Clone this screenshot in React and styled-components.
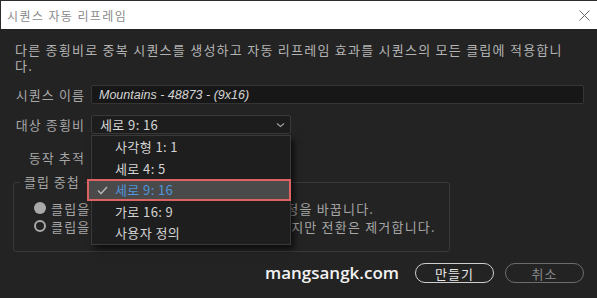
import React from "react";
import styled, { createGlobalStyle, css } from "styled-components";

const GlobalStyle = createGlobalStyle`
  html, body {
    margin: 0;
    padding: 0;
    background: #232323;
  }
  * {
    box-sizing: border-box;
  }
`;

const Window = styled.div`
  width: 597px;
  height: 298px;
  background: #232323;
  display: flex;
  flex-direction: column;
  overflow: hidden;
  font-family: "Noto Sans CJK KR", "Noto Sans", sans-serif;
  font-size: 13px;
  letter-spacing: 1px;
`;

const TitleBar = styled.div`
  height: 29px;
  flex: none;
  background: #ffffff;
  border-top: 1px solid #2c2c2c;
  border-left: 1px solid #2c2c2c;
  display: flex;
  align-items: center;
  justify-content: space-between;
  padding: 0 7px 0 6px;
`;

const Title = styled.span`
  font-size: 12px;
  letter-spacing: 1.4px;
  color: #8a8a8a;
`;

const CloseButton = styled.span`
  display: flex;
  width: 11px;
  height: 11px;
  margin-top: 1px;
`;

const Body = styled.div`
  flex: 1;
  display: flex;
  flex-direction: column;
  padding: 0 13px;
`;

const Description = styled.p`
  margin: 13px 0 0 2px;
  line-height: 16px;
  letter-spacing: 1.25px;
  color: #b3b3b3;
  white-space: nowrap;
`;

const FormRow = styled.div`
  display: grid;
  grid-template-columns: 72px 200px 1fr;
  column-gap: 6px;
  align-items: center;
  height: 19px;
  margin-top: ${p => p.$gap}px;
`;

const Label = styled.span`
  text-align: right;
  color: #a6a6a6;
  letter-spacing: 1.1px;
  white-space: nowrap;
`;

const TextField = styled.div`
  grid-column: 2 / 4;
  height: 19px;
  background: #171717;
  border: 1px solid #353535;
  border-radius: 2px;
  padding-left: 7px;
  display: flex;
  align-items: center;
  font-family: "Liberation Sans", Arial, sans-serif;
  font-style: italic;
  font-size: 12.5px;
  letter-spacing: 0;
  color: #d4d4d4;
`;

const SelectWrap = styled.div`
  position: relative;
  height: 19px;
`;

const SelectBox = styled.div`
  height: 19px;
  background: #1d1d1d;
  border: 1px solid #393939;
  border-radius: 2px;
  display: flex;
  align-items: center;
  justify-content: space-between;
  padding: 0 5px 0 8px;
  letter-spacing: 0.4px;
  color: #d6d6d6;
`;

const OptionList = styled.ul`
  position: absolute;
  top: 20px;
  left: 0;
  width: 200px;
  margin: 0;
  padding: 0;
  list-style: none;
  background: #1e1e1e;
  border: 1px solid #3a3a3a;
  box-shadow: 3px 4px 6px rgba(0, 0, 0, 0.65);
  z-index: 3;
`;

const OptionItem = styled.li`
  position: relative;
  height: 21.5px;
  display: flex;
  align-items: center;
  padding-left: 23px;
  letter-spacing: 0.4px;
  color: #d4d4d4;
  white-space: nowrap;

  ${p => p.$selected && css`
    margin: 0 -1px 0 -5px;
    padding-left: 26px;
    border: 2px solid #df6262;
    background: #4a4a4a;
    color: #4f94dc;
  `}
`;

const Check = styled.svg`
  position: absolute;
  left: 8px;
  top: 5px;
`;

const Group = styled.fieldset`
  margin: 7.5px 0 0;
  width: 437px;
  height: 78px;
  padding: 0 6px 8px;
  border: 1px solid #393939;
  border-radius: 3px;
  min-width: 0;
`;

const Legend = styled.legend`
  padding: 0 4px;
  line-height: 16px;
  color: #a6a6a6;
`;

const RadioList = styled.div`
  display: flex;
  flex-direction: column;
  padding: 9px 0 0 14px;
`;

const RadioRow = styled.div`
  display: flex;
  align-items: center;
  gap: 5px;
  height: 18px;
  letter-spacing: 1.2px;
  color: #a6a6a6;
  white-space: nowrap;
`;

const RadioDot = styled.span`
  width: 12px;
  height: 12px;
  flex: none;
  border-radius: 50%;
  ${p => p.$checked
    ? css`background: #a9a9a9;`
    : css`border: 2px solid #a9a9a9;`}
`;

const Footer = styled.div`
  display: flex;
  align-items: center;
  justify-content: flex-end;
  gap: 11px;
  margin-top: 11px;
  height: 19px;
`;

const Watermark = styled.span`
  margin-right: 5px;
  font-family: "Open Sans", sans-serif;
  font-weight: 600;
  font-size: 17px;
  letter-spacing: 0;
  color: #f2f2f2;
`;

const PillButton = styled.button`
  width: 79px;
  height: 20px;
  border-radius: 10px;
  background: transparent;
  font-family: inherit;
  font-size: 13px;
  letter-spacing: 1px;
  padding: 0;
  border: 1px solid ${p => (p.$muted ? "#6c6c6c" : "#cfcfcf")};
  color: ${p => (p.$muted ? "#8a8a8a" : "#e6e6e6")};
`;

const options = ["사각형 1: 1", "세로 4: 5", "세로 9: 16", "가로 16: 9", "사용자 정의"];

export default function App() {
  return (
    <Window>
      <GlobalStyle />
      <TitleBar>
        <Title>시퀀스 자동 리프레임</Title>
        <CloseButton>
          <svg width="11" height="11" viewBox="0 0 11 11">
            <path d="M0.5 0.5 L10.5 10.5 M10.5 0.5 L0.5 10.5" stroke="#6a6a6a" strokeWidth="1" />
          </svg>
        </CloseButton>
      </TitleBar>
      <Body>
        <Description>
          다른 종횡비로 중복 시퀀스를 생성하고 자동 리프레임 효과를 시퀀스의 모든 클립에 적용합니
          <br />
          다.
        </Description>

        <FormRow $gap={11}>
          <Label>시퀀스 이름</Label>
          <TextField>Mountains - 48873 - (9x16)</TextField>
        </FormRow>

        <FormRow $gap={11}>
          <Label>대상 종횡비</Label>
          <SelectWrap>
            <SelectBox>
              <span>세로 9: 16</span>
              <svg width="9" height="6" viewBox="0 0 9 6">
                <path d="M1 1.5 L4.5 4.5 L8 1.5" fill="none" stroke="#a0a0a0" strokeWidth="1.1" />
              </svg>
            </SelectBox>
            <OptionList>
              {options.map(o => (
                <OptionItem key={o} $selected={o === "세로 9: 16"}>
                  {o === "세로 9: 16" && (
                    <Check width="11" height="9" viewBox="0 0 11 9">
                      <path d="M1 4.5 L4 7.5 L10 1" fill="none" stroke="#b0b0b0" strokeWidth="1.6" />
                    </Check>
                  )}
                  {o}
                </OptionItem>
              ))}
            </OptionList>
          </SelectWrap>
        </FormRow>

        <FormRow $gap={13.5}>
          <Label>동작 추적</Label>
        </FormRow>

        <Group>
          <Legend>클립 중첩</Legend>
          <RadioList>
            <RadioRow>
              <RadioDot $checked />
              클립을 중첩하고 중첩 내 클립 프레임 조정을 바꿉니다.
            </RadioRow>
            <RadioRow>
              <RadioDot />
              클립을 중첩하지 않고 클립을 리프레임하지만 전환은 제거합니다.
            </RadioRow>
          </RadioList>
        </Group>

        <Footer>
          <Watermark>mangsangk.com</Watermark>
          <PillButton>만들기</PillButton>
          <PillButton $muted>취소</PillButton>
        </Footer>
      </Body>
    </Window>
  );
}
